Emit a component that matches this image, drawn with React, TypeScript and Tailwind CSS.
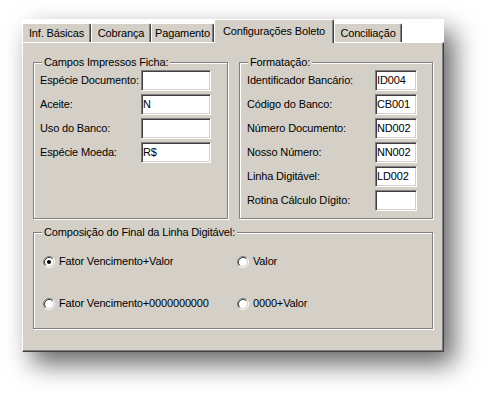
import React from 'react'

function Tab({ label, width, active }: { label: string; width: string; active?: boolean }) {
  if (active) {
    return (
      <div
        className={`${width} relative z-10 -mb-px flex h-[24px] items-center justify-center rounded-t-[2px] border-l border-t border-r border-l-white border-t-white border-r-[#404040] bg-[#d4d0c8] pb-[1px] shadow-[inset_-1px_0_0_#808080]`}
      >
        {label}
      </div>
    )
  }
  return (
    <div
      className={`${width} flex h-[19px] items-center justify-center rounded-t-[2px] border-l border-t border-r border-l-white border-t-white border-r-[#404040] bg-[#d4d0c8] shadow-[inset_-1px_0_0_#808080]`}
    >
      {label}
    </div>
  )
}

function Field({ value = '', width }: { value?: string; width: string }) {
  return (
    <div
      className={`${width} h-[21px] border border-t-[#808080] border-l-[#808080] border-r-white border-b-white bg-white pl-[1px] leading-[19px] shadow-[inset_1px_1px_0_#404040,inset_-1px_-1px_0_#d4d0c8]`}
    >
      {value}
    </div>
  )
}

function Group({ title, className, children }: { title: string; className: string; children: React.ReactNode }) {
  return (
    <div
      className={`${className} relative border border-[#808080] shadow-[inset_1px_1px_0_#fff,1px_1px_0_#fff]`}
    >
      <span className="absolute -top-[7px] left-[8px] bg-[#d4d0c8] px-[2px] leading-[13px]">{title}</span>
      {children}
    </div>
  )
}

function Radio({ checked }: { checked?: boolean }) {
  return (
    <svg width="12" height="12" viewBox="0 0 12 12" className="shrink-0">
      <circle cx="6" cy="6" r="4.5" fill="#fff" />
      <path d="M2.11 9.89 A5.5 5.5 0 0 1 9.89 2.11" fill="none" stroke="#808080" strokeWidth="1" />
      <path d="M9.89 2.11 A5.5 5.5 0 0 1 2.11 9.89" fill="none" stroke="#fff" strokeWidth="1" />
      <path d="M2.82 9.18 A4.5 4.5 0 0 1 9.18 2.82" fill="none" stroke="#404040" strokeWidth="1" />
      <path d="M9.18 2.82 A4.5 4.5 0 0 1 2.82 9.18" fill="none" stroke="#d4d0c8" strokeWidth="1" />
      {checked && <circle cx="6" cy="6" r="2" fill="#000" />}
    </svg>
  )
}

function Option({ label, checked }: { label: string; checked?: boolean }) {
  return (
    <div className="flex h-[13px] items-center gap-[4px] leading-[13px]">
      <Radio checked={checked} />
      <span>{label}</span>
    </div>
  )
}

const campos = [
  { label: 'Espécie Documento:', value: '' },
  { label: 'Aceite:', value: 'N' },
  { label: 'Uso do Banco:', value: '' },
  { label: 'Espécie Moeda:', value: 'R$' },
]

const formatacao = [
  { label: 'Identificador Bancário:', value: 'ID004' },
  { label: 'Código do Banco:', value: 'CB001' },
  { label: 'Número Documento:', value: 'ND002' },
  { label: 'Nosso Número:', value: 'NN002' },
  { label: 'Linha Digitável:', value: 'LD002' },
  { label: 'Rotina Cálculo Dígito:', value: '' },
]

export default function App() {
  return (
    <div className="min-h-screen bg-white pl-[22px] pt-[19px] font-['Liberation_Sans',Arial,sans-serif] text-[11px] tracking-[-0.15px] text-black">
      <div className="w-[422px] shadow-[10px_12px_24px_rgba(0,0,0,0.6)]">
        <div className="flex h-[23px] items-end">
          <Tab label="Inf. Básicas" width="w-[69px]" />
          <Tab label="Cobrança" width="w-[60px]" />
          <Tab label="Pagamento" width="w-[63px]" />
          <Tab label="Configurações Boleto" width="w-[120px]" active />
          <Tab label="Conciliação" width="w-[68px]" />
        </div>

        <div className="h-[310px] border border-l-white border-t-white border-r-[#404040] border-b-[#404040] bg-[#d4d0c8] pl-[10px] pt-[19px] shadow-[inset_-1px_-1px_0_#808080]">
          <div className="flex gap-[11px]">
            <Group title="Campos Impressos Ficha:" className="h-[157px] w-[195px] pl-[6px] pt-[7px]">
              <div className="flex flex-col gap-[3px]">
                {campos.map((c) => (
                  <div key={c.label} className="flex h-[21px] items-center">
                    <span className="w-[101px]">{c.label}</span>
                    <Field value={c.value} width="w-[70px]" />
                  </div>
                ))}
              </div>
            </Group>

            <Group title="Formatação:" className="h-[157px] w-[194px] pl-[7px] pt-[7px]">
              <div className="flex flex-col gap-[3px]">
                {formatacao.map((f) => (
                  <div key={f.label} className="flex h-[21px] items-center">
                    <span className="w-[128px]">{f.label}</span>
                    <Field value={f.value} width="w-[42px]" />
                  </div>
                ))}
              </div>
            </Group>
          </div>

          <Group
            title="Composição do Final da Linha Digitável:"
            className="mt-[13px] h-[97px] w-[400px] pl-[9px] pt-[22px]"
          >
            <div className="grid grid-cols-[194px_1fr] gap-y-[29px]">
              <Option label="Fator Vencimento+Valor" checked />
              <Option label="Valor" />
              <Option label="Fator Vencimento+0000000000" />
              <Option label="0000+Valor" />
            </div>
          </Group>
        </div>
      </div>
    </div>
  )
}
